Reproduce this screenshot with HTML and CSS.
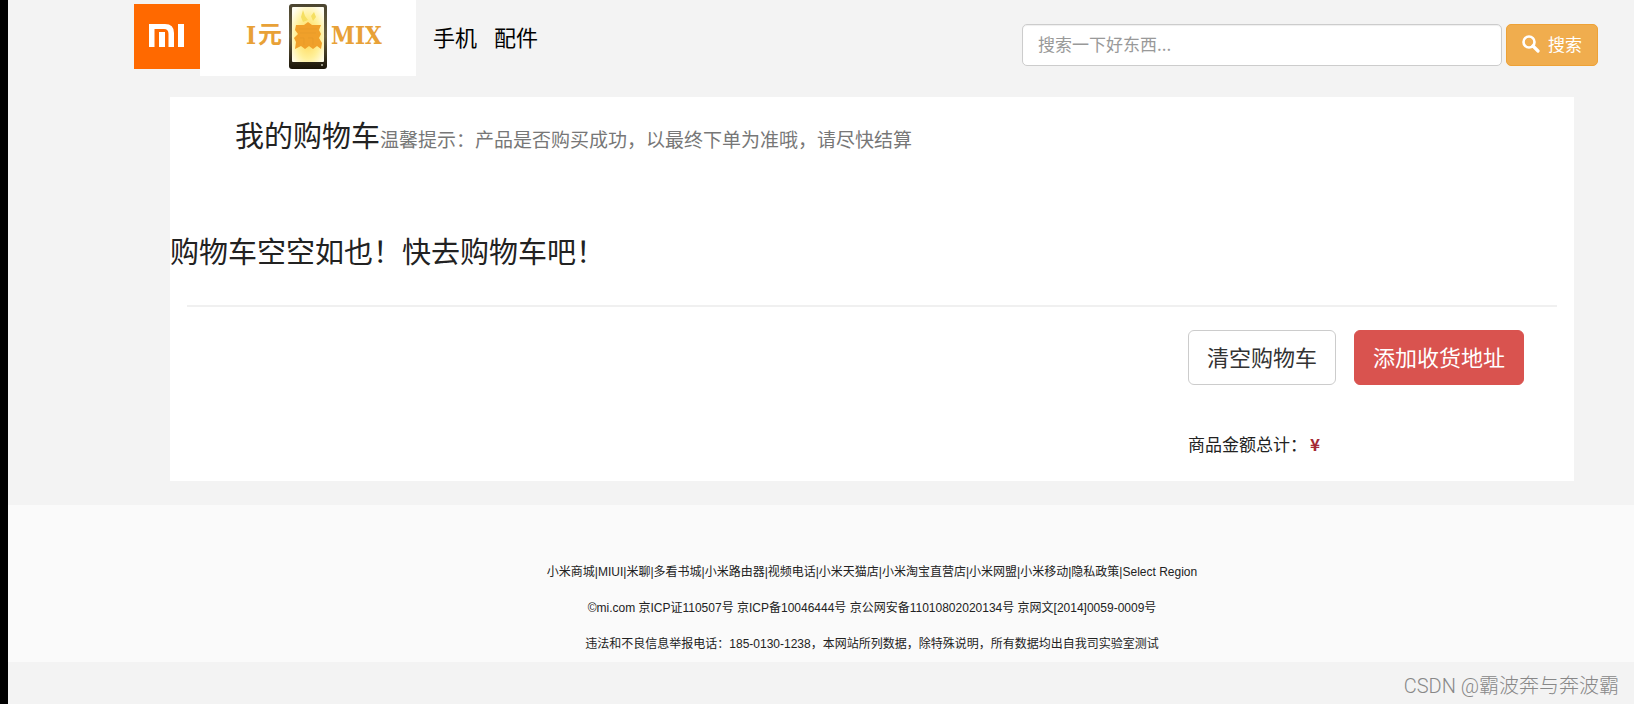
FILE: index.html
```html
<!DOCTYPE html>
<html lang="zh-CN">
<head>
<meta charset="utf-8">
<title>我的购物车</title>
<link rel="stylesheet" href="styles.css">
</head>
<body>
<header class="topbar">
  <a class="logo" href="#" aria-label="小米">
    <svg viewBox="0 0 66 65" width="66" height="65" aria-hidden="true">
      <rect width="66" height="65" fill="#ff6900"/>
      <path d="M15 20H31Q40 20 40 29V43H34.500V30Q34.500 25 30 25H20.500V43H15Z" fill="#fff"/>
      <rect x="25" y="28" width="6" height="15" fill="#fff"/>
      <rect x="44" y="20" width="6" height="23" fill="#fff"/>
    </svg>
  </a>
  <a class="promo" href="#">
    <svg viewBox="0 0 216 76" width="216" height="76" role="img" aria-label="1元赢MIX">
      <defs>
        <radialGradient id="glow" cy="0.55" r="0.65">
          <stop offset="0" stop-color="#ffd24a"/>
          <stop offset="0.6" stop-color="#fff09a"/>
          <stop offset="1" stop-color="#fffdf0"/>
        </radialGradient>
        <linearGradient id="case" x2="0" y2="1">
          <stop offset="0" stop-color="#4b4530"/>
          <stop offset="0.5" stop-color="#6b6040"/>
          <stop offset="1" stop-color="#191408"/>
        </linearGradient>
      </defs>
      <text class="promo-one" x="46" y="44">I</text>
      <text class="promo-yuan" x="58" y="43">元</text>
      <rect x="89" y="4" width="38" height="65" rx="3" fill="url(#case)"/>
      <rect x="92" y="7" width="32" height="55" rx="1" fill="url(#glow)"/>
      <path d="M103 10L105 16L108 20L103 22L101 17ZM114 12L116 17L113 21L111 16Z" fill="#f5df62"/>
      <path d="M96 25H104L108 22L112 25H121L119 30L121 34L119 38L122 43L121 49L117 46L113 49L109 46L105 49L101 46L95 49L96 42L94 38L98 34L95 30Z" fill="#f0a02a"/>
      <path d="M99 29H117M100 33H116M100 38H104V45M108 38H113V45" fill="none" stroke="#e89b28" stroke-width="1"/>
      <circle cx="122" cy="65" r="1" fill="#bba"/>
      <text class="promo-mix" x="131" y="44">MIX</text>
    </svg>
  </a>
  <nav class="nav">
    <a href="#">手机</a>
    <a href="#">配件</a>
  </nav>
  <form class="search">
    <input class="search-input" type="text" placeholder="搜索一下好东西..." aria-label="搜索">
    <button class="search-button" type="button">
      <svg viewBox="0 0 18 18" width="18" height="18" aria-hidden="true">
        <circle cx="7" cy="7" r="5.500" fill="none" stroke="#fff" stroke-width="2.600"/>
        <path d="M11 11L16 16" stroke="#fff" stroke-width="3.200" stroke-linecap="round"/>
      </svg>
      搜索
    </button>
  </form>
</header>

<main class="cart">
  <div class="cart-head">
    <h1>我的购物车</h1>
    <small>温馨提示：产品是否购买成功，以最终下单为准哦，请尽快结算</small>
  </div>
  <h2 class="cart-empty">购物车空空如也！快去购物车吧！</h2>
  <hr class="rule">
  <div class="checkout">
    <div class="actions">
      <button class="btn" type="button">清空购物车</button>
      <button class="btn btn-danger" type="button">添加收货地址</button>
    </div>
    <p class="total">商品金额总计：<strong>¥</strong></p>
  </div>
</main>

<footer class="footer">
  <p>小米商城|MIUI|米聊|多看书城|小米路由器|视频电话|小米天猫店|小米淘宝直营店|小米网盟|小米移动|隐私政策|Select Region</p>
  <p>©mi.com 京ICP证110507号 京ICP备10046444号 京公网安备11010802020134号 京网文[2014]0059-0009号</p>
  <p>违法和不良信息举报电话：185-0130-1238，本网站所列数据，除特殊说明，所有数据均出自我司实验室测试</p>
</footer>
<div class="watermark">CSDN @霸波奔与奔波霸</div>
</body>
</html>
```
FILE: styles.css
```css
* {
  box-sizing: border-box;
}

body {
  margin: 0;
  min-height: 100vh;
  border-left: 8px solid #000;
  background: #f3f3f3;
  color: #222;
  font-family: "Noto Sans CJK SC", sans-serif;
  font-size: 17px;
}

h1,
h2,
p {
  margin: 0;
  font-weight: 400;
}

a {
  color: #000;
  text-decoration: none;
}

button,
input {
  font: inherit;
}

.topbar {
  display: flex;
  align-items: flex-start;
  padding: 0 36px 20px 126px;
}

.logo {
  padding-top: 4px;
}

.logo svg,
.promo svg {
  display: block;
}

.promo {
  background: #fff;
}

.promo text {
  fill: #e8a137;
  font-weight: 700;
}

.promo-one,
.promo-mix {
  font-family: "DejaVu Serif Condensed", "DejaVu Serif", serif;
  font-size: 24px;
}

.promo-yuan {
  font-family: "Noto Sans CJK SC", sans-serif;
  font-size: 24px;
}

.nav {
  display: flex;
  gap: 17px;
  padding: 20px 0 0 17px;
  font-size: 22px;
  line-height: 32px;
}

.search {
  display: flex;
  gap: 4px;
  width: 576px;
  margin-left: auto;
  padding-top: 24px;
}

.search-input {
  flex: 1;
  min-width: 0;
  height: 42px;
  padding: 0 15px 3px;
  border: 1px solid #ccc;
  border-radius: 5px;
  background: #fff;
  box-shadow: inset 0 1px 1px #0001;
}

.search-input::placeholder {
  color: #999;
  opacity: 1;
}

.search-button {
  display: flex;
  align-items: center;
  justify-content: center;
  gap: 8px;
  width: 92px;
  height: 42px;
  padding: 0 0 3px;
  border: 1px solid #eea236;
  border-radius: 5px;
  background: #f0ad4e;
  color: #fff;
}

.cart {
  margin: 1px 60px 24px 162px;
  padding-bottom: 23px;
  background: #fff;
}

.cart-head {
  display: flex;
  align-items: baseline;
  padding: 17px 65px 0;
  line-height: 40px;
}

.cart-head h1,
.cart-empty {
  font-size: 29px;
}

.cart-head small {
  color: #777;
  font-size: 19px;
}

.cart-empty {
  padding-top: 71px;
  line-height: 40px;
}

.rule {
  margin: 35px 17px 23px;
  border: 0;
  border-top: 2px solid #f0f0f0;
}

.checkout {
  width: 386px;
  margin-left: auto;
}

.actions {
  display: flex;
  gap: 18px;
}

.btn {
  height: 55px;
  padding: 0 18px 4px;
  border: 1px solid #ccc;
  border-radius: 6px;
  background: #fff;
  color: #333;
  font-size: 22px;
}

.btn-danger {
  border-color: #d9534f;
  background: #d9534f;
  color: #fff;
}

.total {
  padding-top: 45px;
  line-height: 28px;
}

.total strong {
  margin-left: 3px;
  color: #a52a35;
}

.footer {
  display: flex;
  flex-direction: column;
  gap: 16px;
  padding: 57px 60px 8px 162px;
  background: #fafafa;
  font-family: "Liberation Sans", "Noto Sans CJK SC", sans-serif;
  font-size: 12px;
  line-height: 20px;
  text-align: center;
}

.watermark {
  padding: 9px 15px 0;
  color: #888;
  font-family: Roboto, "Noto Sans CJK SC", sans-serif;
  font-size: 20px;
  font-weight: 300;
  line-height: 30px;
  text-align: right;
}
```
